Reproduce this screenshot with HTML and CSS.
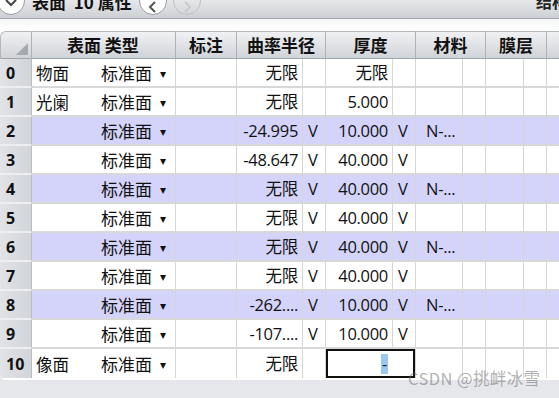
FILE: index.html
```html
<!DOCTYPE html>
<html lang="zh">
<head>
<meta charset="utf-8">
<link rel="stylesheet" href="styles.css">
</head>
<body>
<div class="app">
  <div class="topbar">
    <span class="circle btn-down"><svg width="14" height="10" viewBox="0 0 14 10"><path d="M2 2 L7 7 L12 2" fill="none" stroke="#444" stroke-width="2"/></svg></span>
    <span class="title">表面&nbsp; 10 属性</span>
    <span class="circle btn-prev"><svg width="10" height="14" viewBox="0 0 10 14"><path d="M7 2 L2 7 L7 12" fill="none" stroke="#555" stroke-width="2"/></svg></span>
    <span class="circle btn-next"><svg width="10" height="14" viewBox="0 0 10 14"><path d="M3 2 L8 7 L3 12" fill="none" stroke="#c4c6ca" stroke-width="1.6"/></svg></span>
    <span class="spacer"></span>
    <span class="struct">结构</span>
  </div>
  <div class="strip"></div>
  <div class="tablewrap">
    <table class="grid">
      <colgroup>
        <col class="w-num"><col class="w-surf"><col class="w-type"><col class="w-note">
        <col class="w-rad"><col class="w-v"><col class="w-thk"><col class="w-v">
        <col class="w-mat"><col class="w-v"><col class="w-coat"><col class="w-v"><col class="w-more">
      </colgroup>
      <thead>
        <tr>
          <th class="corner"><svg width="12" height="12" viewBox="0 0 12 12"><path d="M12 0 L12 12 L0 12 Z" fill="#a6a9ae"/></svg></th>
          <th colspan="2" class="h-left">表面 类型</th>
          <th class="h-note">标注</th>
          <th colspan="2">曲率半径</th>
          <th colspan="2">厚度</th>
          <th colspan="2">材料</th>
          <th colspan="2">膜层</th>
          <th class="h-more"></th>
        </tr>
      </thead>
      <tbody>
        <tr><td class="num">0</td><td class="surf">物面</td><td class="type">标准面<span class="arr">▾</span></td><td></td><td class="r">无限</td><td></td><td class="r">无限</td><td></td><td></td><td></td><td></td><td></td><td></td></tr>
        <tr><td class="num">1</td><td class="surf">光阑</td><td class="type">标准面<span class="arr">▾</span></td><td></td><td class="r">无限</td><td></td><td class="r">5.000</td><td></td><td></td><td></td><td></td><td></td><td></td></tr>
        <tr class="hl"><td class="num">2</td><td class="surf"></td><td class="type">标准面<span class="arr">▾</span></td><td></td><td class="r">-24.995</td><td class="v">V</td><td class="r">10.000</td><td class="v">V</td><td class="mat">N-...</td><td></td><td></td><td></td><td></td></tr>
        <tr><td class="num">3</td><td class="surf"></td><td class="type">标准面<span class="arr">▾</span></td><td></td><td class="r">-48.647</td><td class="v">V</td><td class="r">40.000</td><td class="v">V</td><td></td><td></td><td></td><td></td><td></td></tr>
        <tr class="hl"><td class="num">4</td><td class="surf"></td><td class="type">标准面<span class="arr">▾</span></td><td></td><td class="r">无限</td><td class="v">V</td><td class="r">40.000</td><td class="v">V</td><td class="mat">N-...</td><td></td><td></td><td></td><td></td></tr>
        <tr><td class="num">5</td><td class="surf"></td><td class="type">标准面<span class="arr">▾</span></td><td></td><td class="r">无限</td><td class="v">V</td><td class="r">40.000</td><td class="v">V</td><td></td><td></td><td></td><td></td><td></td></tr>
        <tr class="hl"><td class="num">6</td><td class="surf"></td><td class="type">标准面<span class="arr">▾</span></td><td></td><td class="r">无限</td><td class="v">V</td><td class="r">40.000</td><td class="v">V</td><td class="mat">N-...</td><td></td><td></td><td></td><td></td></tr>
        <tr><td class="num">7</td><td class="surf"></td><td class="type">标准面<span class="arr">▾</span></td><td></td><td class="r">无限</td><td class="v">V</td><td class="r">40.000</td><td class="v">V</td><td></td><td></td><td></td><td></td><td></td></tr>
        <tr class="hl"><td class="num">8</td><td class="surf"></td><td class="type">标准面<span class="arr">▾</span></td><td></td><td class="r">-262....</td><td class="v">V</td><td class="r">10.000</td><td class="v">V</td><td class="mat">N-...</td><td></td><td></td><td></td><td></td></tr>
        <tr><td class="num">9</td><td class="surf"></td><td class="type">标准面<span class="arr">▾</span></td><td></td><td class="r">-107....</td><td class="v">V</td><td class="r">10.000</td><td class="v">V</td><td></td><td></td><td></td><td></td><td></td></tr>
        <tr class="last"><td class="num">10</td><td class="surf">像面</td><td class="type">标准面<span class="arr">▾</span></td><td></td><td class="r">无限</td><td></td><td class="r sel" colspan="2"><span class="caret">-</span></td><td></td><td></td><td></td><td></td><td></td></tr>
      </tbody>
    </table>
  </div>
  <div class="bottom"></div>
  <div class="watermark">CSDN @挑衅冰雪</div>
</div>
</body>
</html>
```

FILE: styles.css
```css
* { box-sizing: border-box; }
html, body { margin: 0; padding: 0; }
body {
  width: 559px;
  height: 398px;
  overflow: hidden;
  background: #e6e7ea;
  font-family: "Open Sans", "Noto Sans CJK SC", sans-serif;
  color: #111;
}
.app { position: relative; display: flex; flex-direction: column; width: 559px; height: 398px; overflow: hidden; }
.topbar {
  height: 19px;
  flex: none;
  display: flex;
  align-items: flex-start;
  background: linear-gradient(#e6e7e9, #cdd0d4);
  border-bottom: 1px solid #a4a7ac;
  overflow: hidden;
}
.circle {
  flex: none;
  width: 28px;
  height: 28px;
  margin-top: -13px;
  border-radius: 50%;
  display: flex;
  align-items: flex-end;
  justify-content: center;
}
.btn-down { background: #fff; border: 1px solid #9a9ca0; margin-left: -3px; padding-bottom: 6px; }
.btn-prev { background: #fff; border: 1px solid #9a9ca0; margin-left: 7px; padding-bottom: 0; }
.btn-next { background: transparent; border: 1px solid #bfc1c5; margin-left: 6px; padding-bottom: 0; }
.title {
  margin-left: 7px;
  margin-top: -7px;
  font-family: "Noto Sans CJK SC", sans-serif;
  font-weight: 700;
  font-size: 17px;
  line-height: 17px;
  color: #111;
}
.spacer { flex: 1; }
.struct {
  flex: none;
  margin-top: -7px;
  font-family: "Noto Sans CJK SC", sans-serif;
  font-weight: 700;
  font-size: 16px;
  line-height: 17px;
  margin-right: -9px;
  color: #222;
}
.strip { height: 12px; flex: none; background: linear-gradient(#f6f7f8, #ffffff); }
.tablewrap { flex: none; height: 349px; overflow: hidden; background: #fff; border-bottom-left-radius: 6px; }
.grid {
  table-layout: fixed;
  border-collapse: separate;
  border-spacing: 0;
  width: 587px;
  font-size: 16.5px;
}
.w-num { width: 32px; } .w-surf { width: 63px; } .w-type { width: 81px; } .w-note { width: 61px; }
.w-rad { width: 66px; } .w-v { width: 23px; } .w-thk { width: 67px; } .w-mat { width: 47px; }
.w-coat { width: 38px; } .w-more { width: 40px; }
th {
  height: 28px;
  padding: 0;
  font-family: "Noto Sans CJK SC", sans-serif;
  font-weight: 700;
  font-size: 17px;
  color: #111;
  background: linear-gradient(#f0f1f3, #d0d3d8);
  border-top: 1px solid #b4b7bc;
  border-right: 1px solid #aeb2b8;
  border-bottom: 1px solid #a2a6ac;
  text-align: center;
  line-height: 26px;
  white-space: nowrap;
  overflow: hidden;
}
th.corner {
  border-left: 1px solid #b4b7bc;
  border-top-left-radius: 6px;
  text-align: right;
  vertical-align: bottom;
  padding: 0 3px 3px 0;
  line-height: 0;
}
th.h-left { text-align: left; padding-left: 35px; }
td {
  height: 29px;
  padding: 0 4px;
  border-right: 1px solid #d6d6d6;
  border-bottom: 2px solid #d8d8d8;
  font-family: "Open Sans", "Noto Sans CJK SC", sans-serif;
  font-size: 16.5px;
  line-height: 26px;
  white-space: nowrap;
  overflow: hidden;
  color: #111;
  letter-spacing: -0.3px;
}
tr.last td { border-bottom: none; }
td.num {
  font-weight: 700;
  font-size: 16px;
  padding-left: 6px;
  background: linear-gradient(90deg, #e1e3e6, #d1d4d9);
  border-right: 1px solid #b9bcc1;
  border-bottom: 2px solid #eceef0;
  letter-spacing: 0;
}
td.surf { border-right: none; font-family: "Noto Sans CJK SC", sans-serif; letter-spacing: 0; }
td.type { text-align: right; padding-right: 9px; font-family: "Noto Sans CJK SC", sans-serif; font-size: 17px; letter-spacing: 0; }
.arr { font-size: 12px; margin-left: 8px; vertical-align: 2px; }
td.r { text-align: right; font-family: "Open Sans", "Noto Sans CJK SC", sans-serif; }
td.v { padding-left: 5px; }
td.mat { padding-left: 10px; overflow: visible; }
tr.hl td { background: #d4d4fa; }
tr.hl td.num { background: linear-gradient(90deg, #e1e3e6, #d1d4d9); }
td.sel {
  box-shadow: inset 0 0 0 2px #111;
  padding-right: 27px;
}
.caret {
  display: inline-block;
  background: #99c8f0;
  width: 7px;
  text-align: center;
  line-height: 20px;
  color: #223;
}
.watermark {
  position: absolute;
  left: 408px;
  top: 366px;
  font-family: "Noto Sans CJK SC", sans-serif;
  font-size: 16.5px;
  color: rgba(100, 100, 105, 0.5);
  letter-spacing: 0.4px;
  white-space: nowrap;
}
.bottom { flex: 1; background: #e6e7ea; }
```
